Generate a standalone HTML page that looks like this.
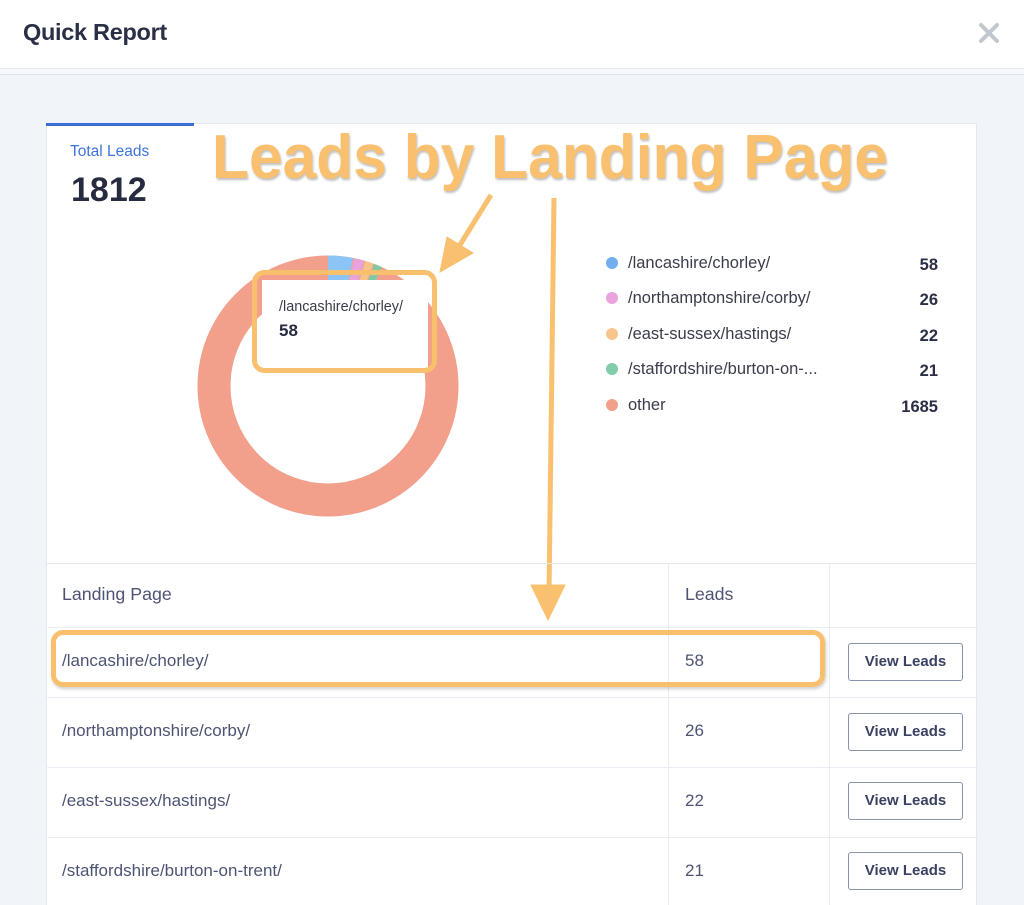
<!DOCTYPE html>
<html><head><meta charset="utf-8"><style>
*{box-sizing:border-box;margin:0;padding:0}
html,body{width:1024px;height:905px;overflow:hidden}
body{background:#f1f4f9;font-family:"Liberation Sans",sans-serif;position:relative}
.hdr{position:absolute;left:0;top:0;width:1024px;height:69px;background:#fff;border-bottom:1px solid #e6e9ef}
.strip{position:absolute;left:0;top:69px;width:1024px;height:6px;background:#f7f8fb;border-bottom:1px solid #dfe4ec}
.title{position:absolute;left:23px;top:19px;font-size:23.5px;font-weight:bold;color:#2a2f45;letter-spacing:-0.3px}
.card{position:absolute;left:46px;top:123px;width:931px;height:782px;background:#fff;border:1px solid #e3e7ee;border-bottom:none}
.tab{position:absolute;left:46px;top:123px;width:148px;height:3px;background:#3a6fd8}
.abs{position:absolute}
.leg{position:absolute;left:628px;font-size:16.5px;color:#3a3d4a}
.dot{position:absolute;left:606px;width:12px;height:12px;border-radius:50%}
.num{position:absolute;right:86px;font-size:16.5px;font-weight:bold;color:#2a2f45}
.hl{position:absolute;left:46px;width:931px;height:1px;background:#e9edf3}
.vl{position:absolute;top:564px;width:1px;height:341px;background:#e9edf3}
.cell{position:absolute;font-size:17px;color:#4d5473}
.btn{position:absolute;left:848px;width:115px;height:38px;border:1px solid #8a91ad;border-radius:3px;font-size:15px;font-weight:bold;color:#3b4163;text-align:center;line-height:36px;background:#fff}
</style></head><body>
<div class="hdr"></div><div class="strip"></div>
<div class="title">Quick Report</div>
<svg class="abs" style="left:978px;top:22px" width="22" height="22"><path d="M3 3L19 19M19 3L3 19" stroke="#c2c6cf" stroke-width="4" stroke-linecap="round"/></svg>
<div class="card"></div><div class="tab"></div>
<div class="abs" style="left:70px;top:143px;font-size:15.5px;color:#3e74d9">Total Leads</div>
<div class="abs" style="left:71px;top:171px;font-size:34px;font-weight:bold;color:#262b40">1812</div>

<svg class="abs" style="left:0;top:0" width="1024" height="905">
<g transform="rotate(-90 328 386)">
<circle cx="328" cy="386" r="114" fill="none" stroke="#f2a08c" stroke-width="33"/>
<circle cx="328" cy="386" r="114" fill="none" stroke="#8cc4f5" stroke-width="33" stroke-dasharray="22 700"/>
<circle cx="328" cy="386" r="114" fill="none" stroke="#e8a2dc" stroke-width="33" stroke-dasharray="9 707" stroke-dashoffset="-23"/>
<circle cx="328" cy="386" r="114" fill="none" stroke="#f6c38a" stroke-width="33" stroke-dasharray="7.5 709" stroke-dashoffset="-33"/>
<circle cx="328" cy="386" r="114" fill="none" stroke="#7fcaa6" stroke-width="33" stroke-dasharray="7 709" stroke-dashoffset="-41.5"/>
</g>
<rect x="262" y="280" width="166" height="88" fill="#fff"/>
<rect x="254.5" y="272.5" width="180" height="98" rx="10" fill="none" stroke="#f8bf6d" stroke-width="5"/>
<text x="279" y="311" font-size="14.4" fill="#3a3d4a" font-family="Liberation Sans">/lancashire/chorley/</text>
<text x="279" y="336" font-size="17" font-weight="bold" fill="#262b40" font-family="Liberation Sans">58</text>
<text x="212" y="178" font-size="62" font-weight="bold" fill="#f8c06f" font-family="Liberation Sans" textLength="676" lengthAdjust="spacingAndGlyphs" style="filter:drop-shadow(1px 2px 1px rgba(0,0,0,.25))">Leads by Landing Page</text>
<g fill="#f8c06f" stroke="#f8c06f">
<line x1="491" y1="195" x2="458" y2="248" stroke-width="5"/>
<polygon points="440,272 447,237 473,253" stroke-width="1"/>
<line x1="554" y1="198" x2="549" y2="595" stroke-width="5"/>
<polygon points="548,620 531,585 565,585" stroke-width="1"/>
</g>
</svg>

<div class="dot" style="top:257px;background:#74aef0"></div><div class="leg" style="top:254px">/lancashire/chorley/</div><div class="num" style="top:256px">58</div>
<div class="dot" style="top:292px;background:#eaa3dc"></div><div class="leg" style="top:289px">/northamptonshire/corby/</div><div class="num" style="top:291px">26</div>
<div class="dot" style="top:328px;background:#f7c58d"></div><div class="leg" style="top:325px">/east-sussex/hastings/</div><div class="num" style="top:327px">22</div>
<div class="dot" style="top:363px;background:#82cbab"></div><div class="leg" style="top:360px">/staffordshire/burton-on-...</div><div class="num" style="top:362px">21</div>
<div class="dot" style="top:399px;background:#f2a08c"></div><div class="leg" style="top:396px">other</div><div class="num" style="top:398px">1685</div>

<div class="hl" style="top:563px;background:#e3e7ee"></div>
<div class="hl" style="top:627px"></div><div class="hl" style="top:697px"></div><div class="hl" style="top:767px"></div><div class="hl" style="top:837px"></div>
<div class="vl" style="left:668px"></div><div class="vl" style="left:829px;box-shadow:-4px 0 8px rgba(0,0,0,.05)"></div>
<div class="cell" style="left:62px;top:584px;font-size:17.8px">Landing Page</div>
<div class="cell" style="left:685px;top:584px;font-size:17.8px">Leads</div>
<div class="cell" style="left:62px;top:651px">/lancashire/chorley/</div><div class="cell" style="left:685px;top:651px">58</div>
<div class="cell" style="left:62px;top:721px">/northamptonshire/corby/</div><div class="cell" style="left:685px;top:721px">26</div>
<div class="cell" style="left:62px;top:791px">/east-sussex/hastings/</div><div class="cell" style="left:685px;top:791px">22</div>
<div class="cell" style="left:62px;top:861px">/staffordshire/burton-on-trent/</div><div class="cell" style="left:685px;top:861px">21</div>
<div class="abs" style="left:51px;top:630px;width:774px;height:57px;border:5px solid #f8bf6d;border-radius:12px;box-shadow:1px 2px 3px rgba(0,0,0,.2)"></div>
<div class="btn" style="top:643px">View Leads</div>
<div class="btn" style="top:713px">View Leads</div>
<div class="btn" style="top:782px">View Leads</div>
<div class="btn" style="top:852px">View Leads</div>
</body></html>
